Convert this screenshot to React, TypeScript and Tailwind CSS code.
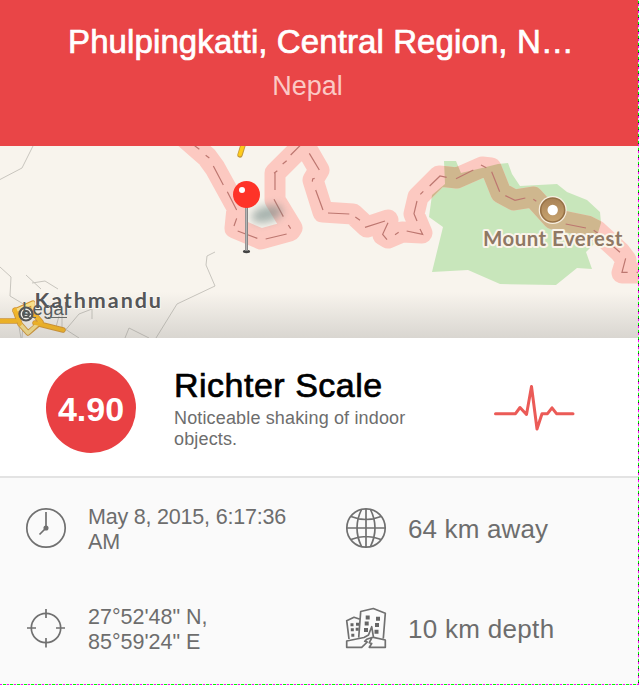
import type { ReactNode } from "react";

const BORDER =
  "M184 137L207 157L215 168L237 208L235 228L261 239L290 231L292 228L275 200L275 173L304 144L319 170L313 180L323 212L353 214L367 227L388 220L383 235L388 238L402 232L422 233L414 214L418 197L439 176L457 178L482 167L491 168L501 193L514 200L533 197L553 219L587 226L597 231L620 252L626 260L622 273L645 273";
const PARK =
  "M444 161L456 161L461 173L482 168L498 164L508 163L512 174L520 186L557 184L567 192L587 200L600 212L601 223L595 243L586 252L592 269L577 268L556 285L500 284L468 270L432 272L443 227L429 217L432 195L445 184Z";

function MapView() {
  return (
    <svg className="block h-[192px] w-full" viewBox="0 146 639 192" fill="none">
      <defs>
        <clipPath id="park"><path d={PARK} /></clipPath>
        <linearGradient id="fade" x1="0" y1="0" x2="0" y2="1">
          <stop offset="0" stopColor="#777" stopOpacity="0" />
          <stop offset="1" stopColor="#777" stopOpacity=".24" />
        </linearGradient>
        <linearGradient id="peak" x1="0" y1="0" x2="0" y2="1">
          <stop offset="0" stopColor="#a98256" />
          <stop offset="1" stopColor="#c8a470" />
        </linearGradient>
        <filter id="soft" x="-50%" y="-50%" width="200%" height="200%"><feGaussianBlur stdDeviation="4" /></filter>
      </defs>
      <rect y="146" width="639" height="192" fill="#f8f4ed" />
      <path d={PARK} fill="#c8e6bb" />
      <path d={BORDER} stroke="#fcc9c1" strokeWidth="21" strokeLinejoin="round" />
      <path d={BORDER} stroke="#cfb78e" strokeWidth="21" strokeLinejoin="round" clipPath="url(#park)" />
      <g stroke="#bd7770" strokeWidth="3.6">
        <path transform="translate(170 140) scale(.3333)" d="M70 14l18 14M107 46l11 8M130 78l30 57M172 155l28 55M200 235l-8 23M203 273l59 22M287 297l63-15M355 255l7 11M312 178l28 52M315 98v52M312 100l10-8M338 72l12-10M362 45l30-30M418 40l30 50M427 125l1-8 6-2M437 150l22 60" />
        <path transform="translate(300 140) scale(.3333)" d="M84 219l64 3M166 231l14 10M195 262l60-19M264 248l-16 35 13 16M285 284l11-7M320 273l48 10-8-16M351 183l-9 38 9 22M361 163l9-9M389 138l31-30 20 4" />
        <path transform="translate(420 140) scale(.3333)" d="M108 116l52-26M183 75l16 8M215 95l24 60M256 167l29 14 31-7M340 178l9 6M437 252l61 12M521 271l12 8M545 290l55 47M617 355l-11 42h17M650 397h8" />
      </g>

      <g stroke="#c8c5be" strokeWidth="1">
        <path d="M33 146L22 168L0 179.500M0 267l11 10-1 19 15 9 3 10M26 275l15 14M32 283l13-2 13 8M215 252l-8 4-1 9 9 21-38 18-21 34M63 333l16-19 13-5v10M65 329l14 9M125 338l4-10 20 10M18 321l3 17M23 325l-1 13M56 327l3-11M62 327v-13" />
      </g>
      <g strokeLinejoin="round" strokeLinecap="round">
        <path d="M0 321H16M35 323L63 330M15 310L20 324L28 333L41 322L34 314M15 311L33 303V308" stroke="#d9962c" strokeWidth="5.500" />
        <path d="M20 324L28 333L40 322M15 311L33 303V308" stroke="#ffe58b" strokeWidth="3.500" />
        <path d="M0 321H16M35 323L63 330" stroke="#ffba19" strokeWidth="3.800" />
        <path d="M15 310L20 324M34 314L41 322" stroke="#ffbd21" strokeWidth="3.800" />
        <path d="M244 142L240 155" stroke="#c49a3a" strokeWidth="5.400" />
        <path d="M244 142L240 154.500" stroke="#ffcb1b" strokeWidth="3.600" />
      </g>
      <rect y="292" width="639" height="46" fill="url(#fade)" />

      <circle cx="26" cy="314" r="6.500" fill="#f4f1ea" stroke="#555" strokeWidth="2.200" />
      <circle cx="26" cy="314" r="3" stroke="#555" strokeWidth="2" />
      <text x="34.500" y="307.500" textLength="126.500" className="font-[Lato,sans-serif] text-[21.500px] font-bold" fill="#555658" stroke="#faf7f1" strokeWidth="2" paintOrder="stroke">Kathmandu</text>
      <text x="22" y="315" textLength="46" className="font-['Liberation_Sans',sans-serif] text-[18.500px]" fill="#555b5c">Legal</text>
      <path d="M23 317.500H36M48 317.500H67" stroke="#686b69" />

      <ellipse cx="267" cy="214" rx="16" ry="8" fill="#667f7b" opacity=".55" transform="rotate(-16 267 214)" filter="url(#soft)" />
      <ellipse cx="246.500" cy="251.500" rx="3.600" ry="1.700" fill="#444" />
      <path d="M246.500 204V251" stroke="#858585" strokeWidth="3" />
      <path d="M246.300 205V250" stroke="#b9b9b9" strokeWidth="1.200" />
      <circle cx="246.500" cy="194.500" r="13.500" fill="#fe3328" />
      <circle cx="242" cy="190" r="3" fill="#fff" />

      <circle cx="552.700" cy="210" r="14" fill="#f8efe1" />
      <circle cx="552.700" cy="210" r="12" fill="url(#peak)" stroke="#967146" strokeWidth="1.600" />
      <circle cx="552.700" cy="210" r="5.200" fill="#fff" />
      <text x="483" y="245.500" textLength="139.500" className="font-[Lato,sans-serif] text-[20.500px] font-bold" fill="#8f7864" stroke="#faf4ea" strokeWidth="4" strokeLinejoin="round" paintOrder="stroke">Mount Everest</text>
    </svg>
  );
}

function Icon({ children }: { children: ReactNode }) {
  return (
    <svg className="h-[42px] w-[42px] shrink-0" viewBox="0 0 42 42" fill="none" stroke="#707070" strokeWidth="1.700">
      {children}
    </svg>
  );
}

function Detail({ icon, children, large = false }: { icon: ReactNode; children: ReactNode; large?: boolean }) {
  return (
    <div className="flex h-[100px] items-center pl-[25px]">
      <Icon>{icon}</Icon>
      <div className={large ? "ml-[21px] pt-0.5 text-[26px] leading-8 tracking-[0.15px] whitespace-nowrap" : "ml-[21px] pt-[3px] text-[21.500px] leading-[25px] whitespace-nowrap"}>
        {children}
      </div>
    </div>
  );
}

export default function App() {
  return (
    <main className="relative flex h-[685px] w-[639px] flex-col overflow-hidden bg-[#fafafa] font-['Liberation_Sans',Arial,sans-serif] text-[#6d6d6d]">
      <header className="flex h-[146px] flex-col items-center bg-[#e94547] pt-[22px] text-white">
        <h1 className="pl-[3px] text-[33px] leading-10 tracking-[0.1px] whitespace-nowrap [-webkit-text-stroke:0.7px_white]">Phulpingkatti, Central Region, N…</h1>
        <p className="mt-1 pr-[24px] text-[27px] leading-10 text-[#fbc9c5]">Nepal</p>
      </header>
      <MapView />
      <section className="flex h-[140px] items-center border-b-2 border-[#e3e3e3] bg-white pl-[46px]">
        <div className="mt-0.5 flex h-[90px] w-[90px] items-center justify-center rounded-full bg-[#e94043] pt-0.5 text-[34px] font-bold text-white">4.90</div>
        <div className="ml-[38px] w-[290px]">
          <h2 className="text-[34px] leading-10 tracking-[0.5px] text-black [-webkit-text-stroke:0.7px_black]">Richter Scale</h2>
          <p className="mt-[3px] text-[18px] leading-[21px] tracking-[0.15px]">Noticeable shaking of indoor<br />objects.</p>
        </div>
        <svg className="mt-0.5 ml-[28px] h-[50px] w-[84px]" viewBox="492 383 84 50" fill="none">
          <path d="M495.500 413.700H515.500L520 407.500L526.500 414.500L531.500 386.500L537 429L542 413.700H547.500L552 407.800L556.500 413.700H573" stroke="#eb5b57" strokeWidth="3" strokeLinecap="round" strokeLinejoin="round" />
        </svg>
      </section>
      <section className="grid grid-cols-[320px_319px] grid-rows-[100px_100px]">
        <Detail icon={<><circle cx="21" cy="21" r="19.200" /><path d="M21 5V21L14.500 27.500" /><circle cx="21" cy="21" r="1.700" fill="#707070" /></>}><span className="tracking-[-0.2px]">May 8, 2015, 6:17:36<br />AM</span></Detail>
        <Detail large icon={<><circle cx="21" cy="21" r="19.200" /><path d="M21 2V40M2 21H40M16.500 2.500Q7.500 21 16.500 39.500M25.500 2.500Q34.500 21 25.500 39.500M6 9.500Q21 15.500 36 9.500M6 32.500Q21 26.500 36 32.500" /></>}>64 km away</Detail>
        <Detail icon={<><circle cx="21" cy="21" r="14.700" /><path d="M21 2V11M21 31V40.500M2 21H11M31 21H40" /></>}>27°52'48" N,<br />85°59'24" E</Detail>
        <Detail large icon={<><path d="M4 32L1.700 13.700L9 10.300L15 12.300M13.700 30.500L15.700 4.500L28.300 1.500L40.300 6.300L38.300 31.500M1.700 34L19 30.500L23.500 28L26.700 19.700L28.500 30.300L40.300 33V40.300H24.300L26.700 36.500L24.300 35.700L27 30.500L21.700 32.300L19.700 34.300L22.300 35L16.700 40.300H1.700Z" strokeLinejoin="round" /><path d="M20.700 8.500h4v4h-4zM31 9.800h4v4h-4zM19.700 14.500h4v4h-4zM30 16h4v4h-4zM19 21h4v4h-4zM29.500 22.700h4v4h-4zM5.500 16.200h3v3h-3zM11 15.700h3v3h-3zM5.800 21.300h3v3h-3zM10.700 20.700h3v3h-3zM6.300 26.800h3v3h-3z" fill="#666" stroke="none" /></>}><span className="tracking-[0.3px]">10 km depth</span></Detail>
      </section>
      <div className="pointer-events-none absolute inset-y-0 right-0 w-px bg-[repeating-linear-gradient(0deg,#ff00ff_0_2px,#222_2px_3px,#00ff00_3px_5px,#ddd_5px_7px)]" />
      <div className="pointer-events-none absolute inset-x-0 bottom-0 h-px bg-[repeating-linear-gradient(90deg,#ff00ff_0_2px,#eee_2px_3px,#00ff00_3px_6px,#ddd_6px_7px)]" />
    </main>
  );
}
